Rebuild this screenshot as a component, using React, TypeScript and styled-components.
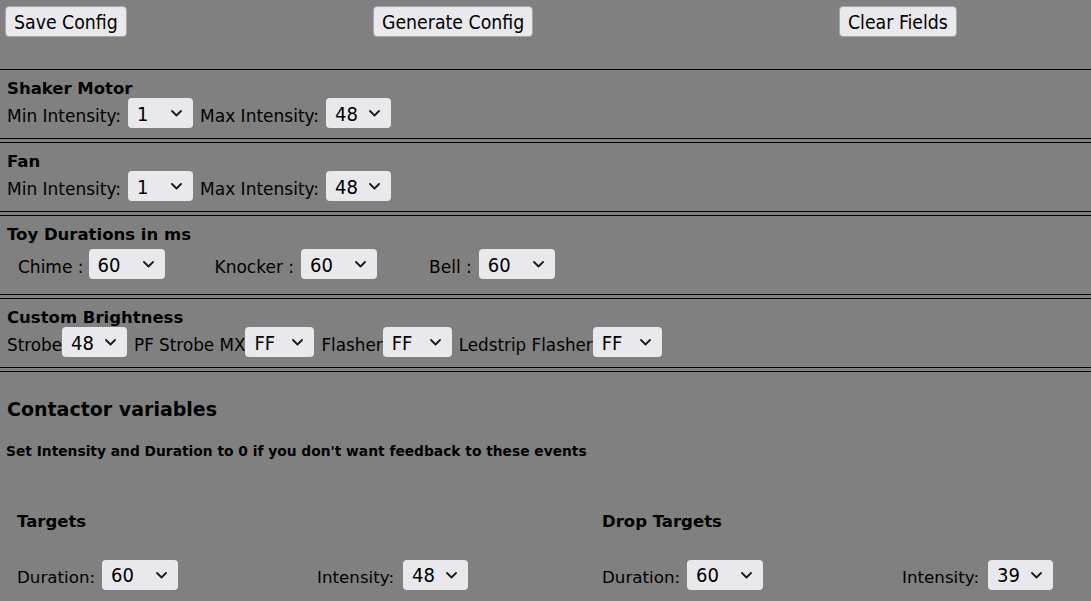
import React from "react";
import styled, { createGlobalStyle } from "styled-components";

const GlobalStyle = createGlobalStyle`
  html, body {
    margin: 0;
    padding: 0;
    background: #808080;
  }
  body {
    font-family: "DejaVu Sans", sans-serif;
    color: #000;
  }
`;

const Page = styled.div`
  width: 1091px;
  min-height: 601px;
  overflow: hidden;
  background: #808080;
  font-family: "DejaVu Sans", sans-serif;
  color: #000;
`;

const ButtonBar = styled.div`
  display: grid;
  grid-template-columns: 368px 466px auto;
  align-items: start;
  padding: 6px 0 0 5px;
  height: 63px;
`;

const ActionButton = styled.button`
  justify-self: start;
  height: 31px;
  padding: 1px 8px 0;
  font-family: "DejaVu Sans Condensed", "DejaVu Sans", sans-serif;
  font-size: 19.3px;
  color: #000;
  background: #e9e9ed;
  border: 1px solid #a3a3ab;
  border-radius: 4px;
  cursor: pointer;
`;

const Section = styled.section`
  border-top: 1px solid #000;
  border-bottom: 1px solid #000;
  margin-bottom: 3px;
  padding: 8px 7px 10px;
`;

const SectionTitle = styled.div`
  box-sizing: border-box;
  font-weight: bold;
  font-size: 16.5px;
  height: 20px;
  padding-top: 2px;
  line-height: 18px;
  white-space: nowrap;
`;

const Row = styled.div<{ $gap?: number; $pad?: number; $indent?: number }>`
  display: flex;
  align-items: center;
  height: 30px;
  gap: ${(p) => p.$gap ?? 7}px;
  padding: ${(p) => p.$pad ?? 0}px 0 ${(p) => p.$pad ?? 0}px ${(p) => p.$indent ?? 0}px;
`;

const Label = styled.span<{ $size?: number }>`
  font-size: ${(p) => p.$size ?? 17}px;
  padding-top: 5px;
  white-space: nowrap;
`;

const Field = styled.span<{ $gap?: number; $after?: number }>`
  display: inline-flex;
  align-items: center;
  gap: ${(p) => p.$gap ?? 7}px;
  margin-right: ${(p) => p.$after ?? 0}px;
`;

const SelectWrap = styled.span<{ $w: number }>`
  position: relative;
  display: inline-block;
  flex: none;
  width: ${(p) => p.$w}px;
  height: 30px;
`;

const NativeSelect = styled.select`
  appearance: none;
  -webkit-appearance: none;
  width: 100%;
  height: 100%;
  margin: 0;
  padding: 1px 24px 0 9px;
  font-family: "DejaVu Sans Condensed", "DejaVu Sans", sans-serif;
  font-size: 20px;
  color: #000;
  background: #e9e9ed;
  border: none;
  border-radius: 4px;
  outline: none;
`;

const Chevron = styled.svg`
  position: absolute;
  right: 11px;
  top: 50%;
  width: 11px;
  height: 7px;
  margin-top: -3px;
  pointer-events: none;
`;

const Select: React.FC<{ value: string; width: number; options?: string[] }> = ({
  value,
  width,
  options,
}) => {
  const opts = options ?? [value];
  return (
    <SelectWrap $w={width}>
      <NativeSelect defaultValue={value}>
        {opts.map((o) => (
          <option key={o} value={o}>
            {o}
          </option>
        ))}
      </NativeSelect>
      <Chevron viewBox="0 0 11 7">
        <path d="M1 1 L5.5 5.5 L10 1" fill="none" stroke="#1a1a1a" strokeWidth="1.8" strokeLinecap="round" strokeLinejoin="round" />
      </Chevron>
    </SelectWrap>
  );
};

const Contactor = styled.section`
  border-top: 1px solid #000;
  padding: 0 0 0 7px;
`;

const ContactorTitle = styled.h3`
  margin: 26px 0 0;
  font-size: 19px;
  line-height: 23px;
  font-weight: bold;
`;

const Note = styled.p`
  margin: 22px 0 0 -1px;
  font-size: 13.8px;
  line-height: 16px;
  font-weight: bold;
  white-space: nowrap;
`;

const Groups = styled.div`
  display: grid;
  grid-template-columns: 585px 1fr;
  margin-top: 53px;
`;

const Group = styled.div`
  padding-left: 10px;
`;

const GroupTitle = styled.div`
  font-weight: bold;
  font-size: 16.5px;
  height: 19px;
  line-height: 19px;
`;

const GroupRow = styled.div`
  display: grid;
  grid-template-columns: 300px auto;
  align-items: center;
  margin-top: 28px;
  height: 31px;
`;

const hex = ["FF", "CC", "99", "66", "33", "00"];
const nums = ["0", "1", "10", "20", "39", "48", "60"];

export default function App() {
  return (
    <Page>
      <GlobalStyle />
      <ButtonBar>
        <ActionButton>Save Config</ActionButton>
        <ActionButton>Generate Config</ActionButton>
        <ActionButton>Clear Fields</ActionButton>
      </ButtonBar>

      <Section>
        <SectionTitle>Shaker Motor</SectionTitle>
        <Row>
          <Label>Min Intensity:</Label>
          <Select value="1" width={65} options={nums} />
          <Label>Max Intensity:</Label>
          <Select value="48" width={65} options={nums} />
        </Row>
      </Section>

      <Section>
        <SectionTitle>Fan</SectionTitle>
        <Row>
          <Label>Min Intensity:</Label>
          <Select value="1" width={65} options={nums} />
          <Label>Max Intensity:</Label>
          <Select value="48" width={65} options={nums} />
        </Row>
      </Section>

      <Section>
        <SectionTitle>Toy Durations in ms</SectionTitle>
        <Row $gap={0} $pad={5} $indent={11}>
          <Field $gap={5} $after={50}>
            <Label>Chime :</Label>
            <Select value="60" width={76} options={nums} />
          </Field>
          <Field $after={52}>
            <Label>Knocker :</Label>
            <Select value="60" width={76} options={nums} />
          </Field>
          <Field>
            <Label>Bell :</Label>
            <Select value="60" width={76} options={nums} />
          </Field>
        </Row>
      </Section>

      <Section>
        <SectionTitle>Custom Brightness</SectionTitle>
        <Row $gap={7}>
          <Field $gap={0}>
            <Label $size={16.8}>Strobe</Label>
            <Select value="48" width={65} options={nums} />
          </Field>
          <Field $gap={0}>
            <Label $size={16.8}>PF Strobe MX</Label>
            <Select value="FF" width={69} options={hex} />
          </Field>
          <Field $gap={0}>
            <Label $size={16.8}>Flasher</Label>
            <Select value="FF" width={69} options={hex} />
          </Field>
          <Field $gap={0}>
            <Label $size={16.8}>Ledstrip Flasher</Label>
            <Select value="FF" width={69} options={hex} />
          </Field>
        </Row>
      </Section>

      <Contactor>
        <ContactorTitle>Contactor variables</ContactorTitle>
        <Note>Set Intensity and Duration to 0 if you don't want feedback to these events</Note>
        <Groups>
          <Group>
            <GroupTitle>Targets</GroupTitle>
            <GroupRow>
              <Field>
                <Label $size={16.7}>Duration:</Label>
                <Select value="60" width={76} options={nums} />
              </Field>
              <Field $gap={9}>
                <Label $size={16.7}>Intensity:</Label>
                <Select value="48" width={65} options={nums} />
              </Field>
            </GroupRow>
          </Group>
          <Group>
            <GroupTitle>Drop Targets</GroupTitle>
            <GroupRow>
              <Field>
                <Label $size={16.7}>Duration:</Label>
                <Select value="60" width={76} options={nums} />
              </Field>
              <Field $gap={9}>
                <Label $size={16.7}>Intensity:</Label>
                <Select value="39" width={65} options={nums} />
              </Field>
            </GroupRow>
          </Group>
        </Groups>
      </Contactor>
    </Page>
  );
}
